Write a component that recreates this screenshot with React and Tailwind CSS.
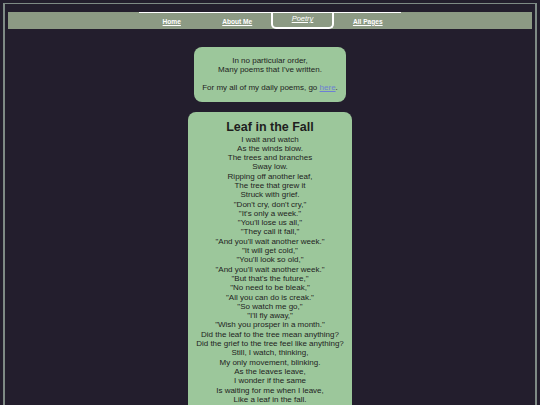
import React from "react";

const poem = [
  "I wait and watch",
  "As the winds blow.",
  "The trees and branches",
  "Sway low.",
  "Ripping off another leaf,",
  "The tree that grew it",
  "Struck with grief.",
  "\"Don't cry, don't cry,\"",
  "\"It's only a week.\"",
  "\"You'll lose us all,\"",
  "\"They call it fall,\"",
  "\"And you'll wait another week.\"",
  "\"It will get cold,\"",
  "\"You'll look so old,\"",
  "\"And you'll wait another week.\"",
  "\"But that's the future,\"",
  "\"No need to be bleak,\"",
  "\"All you can do is creak.\"",
  "\"So watch me go,\"",
  "\"I'll fly away,\"",
  "\"Wish you prosper in a month.\"",
  "Did the leaf to the tree mean anything?",
  "Did the grief to the tree feel like anything?",
  "Still, I watch, thinking,",
  "My only movement, blinking.",
  "As the leaves leave,",
  "I wonder if the same",
  "Is waiting for me when I leave,",
  "Like a leaf in the fall.",
];

export default function App() {
  return (
    <div
      className="min-h-screen bg-[#231e2d] pt-[3px] px-[3px] overflow-hidden"
      style={{ fontFamily: '"Liberation Sans", Arial, sans-serif' }}
    >
      <div className="border-x-2 border-t border-[#7e8a85] px-[3px] pt-[8px] min-h-[420px]">
        <nav className="h-[17px] bg-[#8c9a84]">
          <ul className="mx-auto flex h-full w-[262px] border-t border-white">
            {["Home", "About Me", "Poetry", "All Pages"].map((l) => (
              <li
                key={l}
                className={
                  l === "Poetry"
                    ? "flex w-[63px] mx-[1px] justify-center items-start pt-[2px] border-2 border-t-0 border-white rounded-b-[5px] h-[16px]"
                    : "flex w-[65.5px] justify-center items-center pt-[2px]"
                }
              >
                <a
                  href="#"
                  className={
                    l === "Poetry"
                      ? "text-[7.5px] italic text-white underline leading-none"
                      : "text-[6.6px] font-bold text-white underline leading-none"
                  }
                >
                  {l}
                </a>
              </li>
            ))}
          </ul>
        </nav>
        <main className="flex flex-col items-center pt-[18px] gap-[10px] text-[#1e1e1e]">
          <div className="w-[152px] rounded-[8px] bg-[#9cc79b] pt-[8.5px] pb-[9.5px] text-center text-[8px] leading-[9.25px]">
            <p>In no particular order,</p>
            <p>Many poems that I've written.</p>
            <p>&nbsp;</p>
            <p>
              For my all of my daily poems, go{" "}
              <a href="#" className="text-[#6d7fd6] underline">here</a>.
            </p>
          </div>
          <div className="w-[164px] rounded-[8px] bg-[#9cc79b] pt-[8px] pb-[10px] text-center">
            <h1 className="text-[12.5px] font-bold leading-[14.5px]">Leaf in the Fall</h1>
            <div className="text-[8px] leading-[9.29px]">
              {poem.map((line, i) => (
                <p key={i}>{line}</p>
              ))}
            </div>
          </div>
        </main>
      </div>
    </div>
  );
}
